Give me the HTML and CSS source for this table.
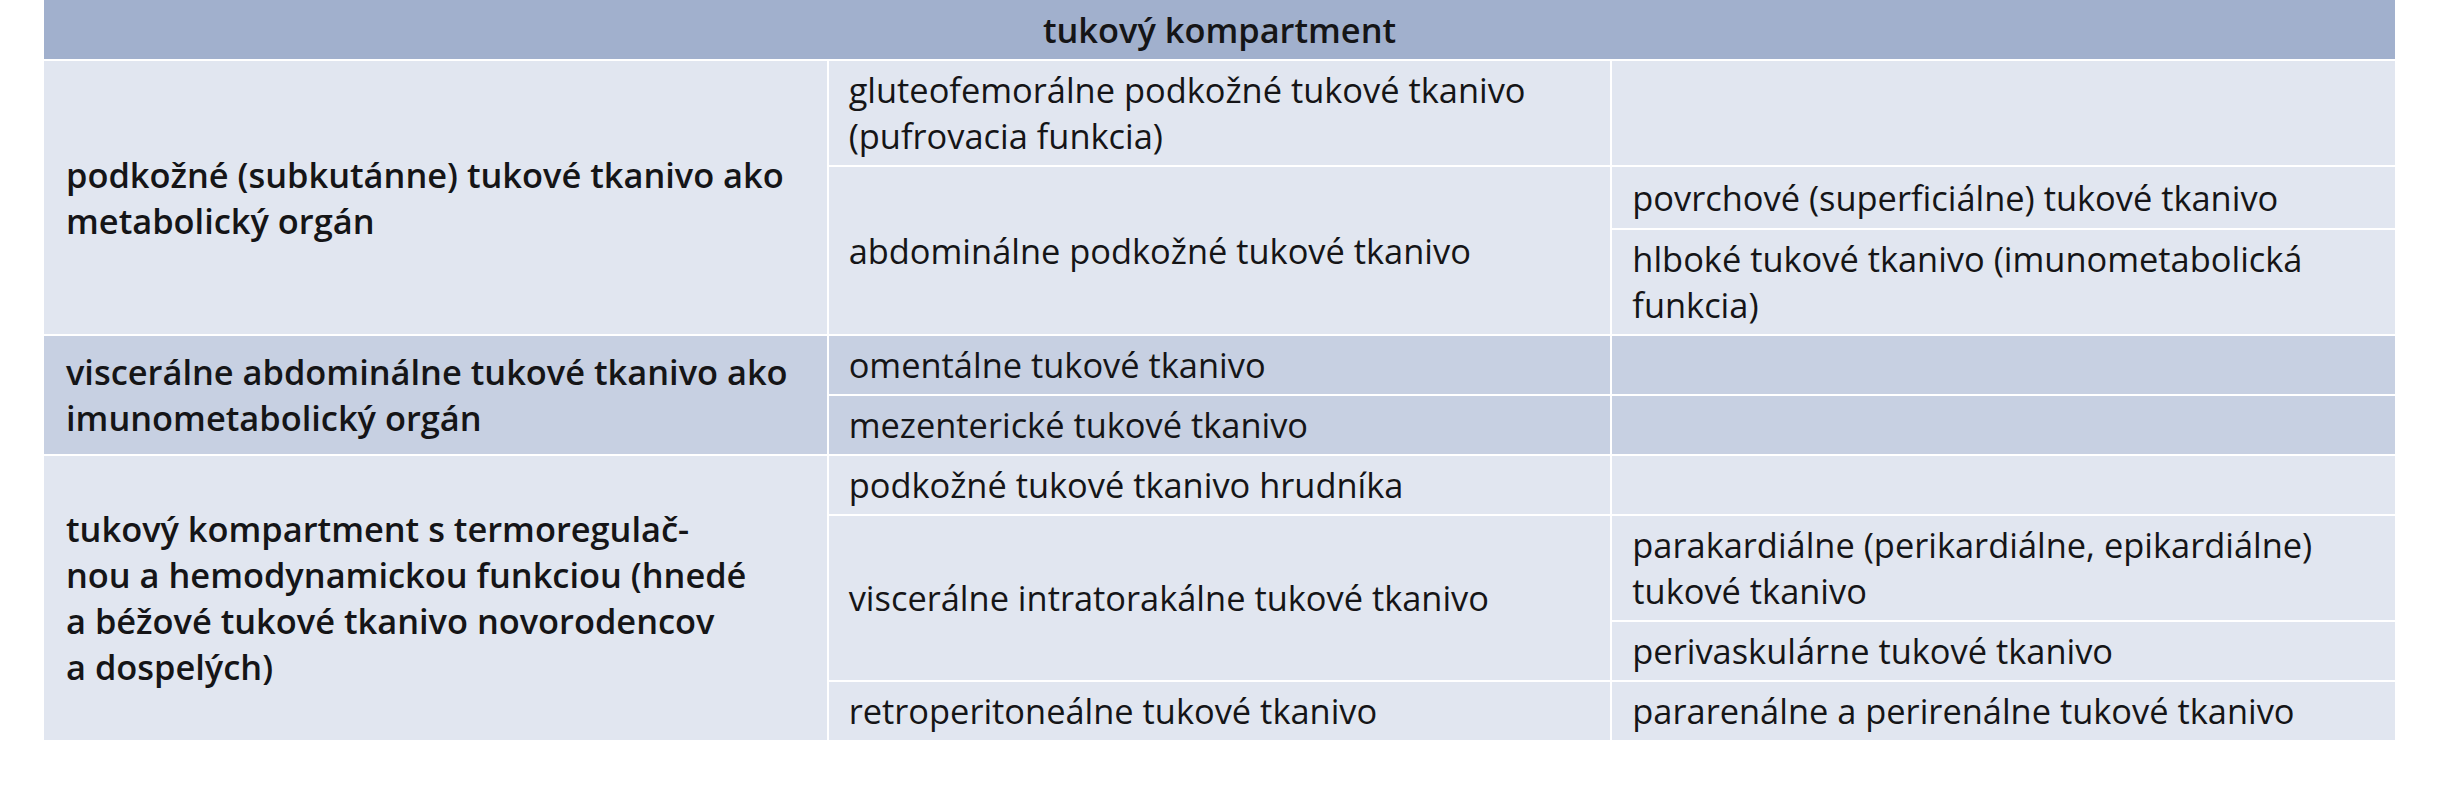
FILE: index.html
```html
<!DOCTYPE html>
<html lang="sk">
<head>
<meta charset="utf-8">
<title>tukový kompartment</title>
<link rel="stylesheet" href="styles.css">
</head>
<body>
<table class="fat">
  <colgroup><col class="c"><col class="c"><col class="c"></colgroup>
  <thead>
    <tr><th colspan="3">tukový kompartment</th></tr>
  </thead>
  <tbody class="light">
    <tr>
      <td rowspan="3" class="main">podkožné (subkutánne) tukové tkanivo ako<br>metabolický orgán</td>
      <td>gluteofemorálne podkožné tukové tkanivo<br>(pufrovacia funkcia)</td>
      <td></td>
    </tr>
    <tr>
      <td rowspan="2">abdominálne podkožné tukové tkanivo</td>
      <td class="tall">povrchové (superficiálne) tukové tkanivo</td>
    </tr>
    <tr>
      <td>hlboké tukové tkanivo (imunometabolická<br>funkcia)</td>
    </tr>
  </tbody>
  <tbody class="dark">
    <tr>
      <td rowspan="2" class="main">viscerálne abdominálne tukové tkanivo ako<br>imunometabolický orgán</td>
      <td>omentálne tukové tkanivo</td>
      <td></td>
    </tr>
    <tr>
      <td>mezenterické tukové tkanivo</td>
      <td></td>
    </tr>
  </tbody>
  <tbody class="light">
    <tr>
      <td rowspan="4" class="main">tukový kompartment s termoregulač-<br>nou a hemodynamickou funkciou (hnedé<br>a béžové tukové tkanivo novorodencov<br>a dospelých)</td>
      <td>podkožné tukové tkanivo hrudníka</td>
      <td></td>
    </tr>
    <tr>
      <td rowspan="2">viscerálne intratorakálne tukové tkanivo</td>
      <td>parakardiálne (perikardiálne, epikardiálne)<br>tukové tkanivo</td>
    </tr>
    <tr>
      <td>perivaskulárne tukové tkanivo</td>
    </tr>
    <tr>
      <td>retroperitoneálne tukové tkanivo</td>
      <td>pararenálne a perirenálne tukové tkanivo</td>
    </tr>
  </tbody>
</table>
</body>
</html>
```

FILE: styles.css
```css
html, body {
  margin: 0;
  padding: 0;
  background: #ffffff;
}

body {
  font-family: "Open Sans", "Noto Sans", sans-serif;
  color: #151517;
}

.fat {
  margin-left: 44px;
  width: 2351px;
  table-layout: fixed;
  border-collapse: collapse;
  font-size: 34.4px;
  line-height: 46px;
}

.fat .c {
  width: 33.333%;
}

.fat th {
  height: 59px;
  padding: 0;
  background: #a1b0cd;
  font-weight: 600;
  text-align: center;
  vertical-align: middle;
}

.fat td {
  padding: 6px 20px;
  border-top: 2px solid #ffffff;
  border-left: 2px solid #ffffff;
  vertical-align: middle;
  text-align: left;
  white-space: nowrap;
}

.fat td.tall {
  padding-top: 8px;
  padding-bottom: 7px;
}

.fat td.main {
  border-left: none;
  padding-left: 22px;
  font-weight: 600;
}

.light td {
  background: #e1e6f0;
}

.dark td {
  background: #c7d0e2;
}
```
